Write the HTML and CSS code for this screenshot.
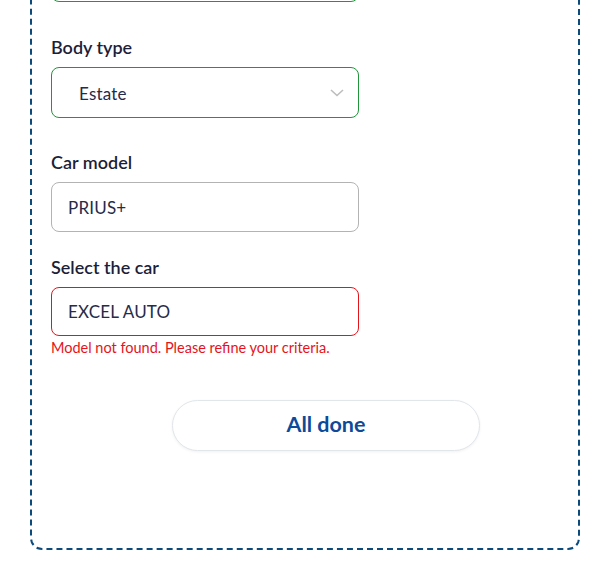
FILE: index.html
```html
<!DOCTYPE html>
<html>
<head>
<meta charset="utf-8">
<link rel="stylesheet" href="styles.css">
</head>
<body>
<div class="panel">
  <div class="field field-prev">
    <div class="box box-ok"></div>
  </div>
  <div class="field field-body">
    <label class="label">Body type</label>
    <div class="box box-ok box-select">
      <span class="value value-select">Estate</span>
      <svg class="chev" width="14" height="8" viewBox="0 0 14 8"><path d="M1 1 L7 6.5 L13 1" fill="none" stroke="#bdbdbd" stroke-width="1.6"/></svg>
    </div>
  </div>
  <div class="field field-model">
    <label class="label">Car model</label>
    <div class="box box-plain"><span class="value">PRIUS+</span></div>
  </div>
  <div class="field field-last">
    <label class="label">Select the car</label>
    <div class="box box-err"><span class="value">EXCEL AUTO</span></div>
    <div class="error">Model not found. Please refine your criteria.</div>
  </div>
  <div class="actions">
    <button class="done">All done</button>
  </div>
</div>
</body>
</html>
```
FILE: styles.css
```css
html, body {
  margin: 0;
  padding: 0;
  background: #ffffff;
}
body {
  font-family: "Lato", "Open Sans", sans-serif;
  color: #1b1f3b;
  overflow: hidden;
  height: 569px;
}
.panel {
  box-sizing: border-box;
  margin: -61px 0 0 30px;
  width: 550px;
  border: 2px dashed #0d4a7c;
  border-radius: 12px;
  padding: 10px 18px 97px 19px;
}
.field {
  display: flex;
  flex-direction: column;
  width: 308px;
}
.field-prev {
  margin-bottom: 33px;
}
.field-body {
  margin-bottom: 32px;
}
.field-model {
  margin-bottom: 23px;
}
.label {
  font-size: 18px;
  font-weight: 600;
  line-height: 24px;
  margin-bottom: 8px;
  color: #1b1f3b;
}
.box {
  box-sizing: border-box;
  height: 50px;
  border-radius: 8px;
  border: 1px solid #b3b3b3;
  display: flex;
  align-items: center;
  padding: 0 16px;
  background: #fff;
}
.box-ok {
  border-color: #21953a;
  height: 51px;
}
.box-err {
  border-color: #e5141b;
  height: 49px;
}
.box-select {
  padding: 0 14px 0 27px;
  justify-content: space-between;
}
.value {
  font-size: 17px;
  color: #262b4a;
  letter-spacing: 0.2px;
}
.value-select {
  padding-top: 2px;
}
.chev {
  display: block;
}
.error {
  margin-top: 4px;
  font-size: 14.5px;
  line-height: 16px;
  color: #e5141b;
}
.actions {
  display: flex;
  padding-top: 44px;
  padding-left: 121px;
}
.done {
  box-sizing: border-box;
  width: 308px;
  height: 51px;
  padding: 0 0 3px 0;
  border-radius: 26px;
  border: 1px solid #e1e6ea;
  background: #fff;
  box-shadow: 0 1px 3px rgba(0, 0, 0, 0.06);
  font-family: "Lato", sans-serif;
  font-size: 21.5px;
  font-weight: 700;
  color: #0c4a9a;
  cursor: pointer;
}
```
